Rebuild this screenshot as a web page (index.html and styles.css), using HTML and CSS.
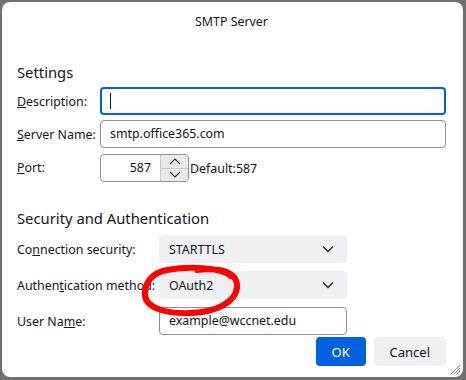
FILE: index.html
```html
<!DOCTYPE html>
<html lang="en">
<head>
    <meta charset="UTF-8">
    <title>SMTP Server</title>
    <link rel="stylesheet" href="styles.css">
</head>
<body>
<div class="dialog">
    <div class="title">SMTP Server</div>

    <h2 class="section">Settings</h2>
    <div class="settings">
        <label class="label"><u>D</u>escription:</label>
        <div class="field focused"><span class="caret"></span></div>

        <label class="label"><u>S</u>erver Name:</label>
        <div class="field">smtp.office365.com</div>

        <label class="label"><u>P</u>ort:</label>
        <div class="port-row">
            <div class="field port">
                <span class="port-value">587</span>
                <span class="spinner">
                    <span class="spin">
                        <svg width="12" height="7" viewBox="0 0 12 7"><path d="M1 6 L6 1 L11 6" fill="none" stroke="#333" stroke-width="1.1"/></svg>
                    </span>
                    <span class="spin">
                        <svg width="12" height="7" viewBox="0 0 12 7"><path d="M1 1 L6 6 L11 1" fill="none" stroke="#333" stroke-width="1.1"/></svg>
                    </span>
                </span>
            </div>
            <span class="default">Default:587</span>
        </div>
    </div>

    <h2 class="section security-title">Security and Authentication</h2>
    <div class="security">
        <label class="label">Co<u>n</u>nection security:</label>
        <div class="select">
            <span>STARTTLS</span>
            <svg width="12" height="8" viewBox="0 0 12 8"><path d="M1 1.5 L6 6.5 L11 1.5" fill="none" stroke="#222" stroke-width="1.3"/></svg>
        </div>

        <label class="label">Authen<u>t</u>ication method:</label>
        <div class="select">
            <span>OAuth2</span>
            <svg width="12" height="8" viewBox="0 0 12 8"><path d="M1 1.5 L6 6.5 L11 1.5" fill="none" stroke="#222" stroke-width="1.3"/></svg>
        </div>

        <label class="label">User Na<u>m</u>e:</label>
        <div class="field user">example@wccnet.edu</div>
    </div>

    <div class="buttons">
        <button class="btn primary">OK</button>
        <button class="btn">Cancel</button>
    </div>

    <!-- hand-drawn red mark around the auth method -->
    <svg class="scribble" width="106" height="54" viewBox="0 0 106 54">
        <path d="M92 12 C80 3 50 2 28 6 C12 9 5 20 6 32 C8 45 30 50 52 49 C78 48 96 38 98 24 C99 14 92 8 80 6 C72 5 64 5 58 6"
              fill="none" stroke="#f00" stroke-width="6" stroke-linecap="round"/>
    </svg>

    <svg class="grip" width="12" height="12" viewBox="0 0 12 12">
        <path d="M11 2 L2 11 M11 5 L5 11 M11 8 L8 11" stroke="#888" stroke-width="1"/>
    </svg>
</div>
</body>
</html>
```

FILE: styles.css
```css
body {
    margin: 0;
    background-color: #707070;
    font-family: "Noto Sans", "Open Sans", sans-serif;
    font-size: 12.4px;
    color: #15141a;
}
.dialog {
    position: relative;
    width: 461px;
    height: 375px;
    margin: 2px 0 0 2px;
    box-sizing: border-box;
    padding: 0 17px 0 15px;
    background-color: white;
    border-radius: 8px;
}
.title {
    height: 40px;
    line-height: 40px;
    text-align: center;
}
.section {
    margin: 20px 0 5px 0;
    font-size: 14.8px;
    font-weight: normal;
    line-height: 20px;
}
.settings {
    display: grid;
    grid-template-columns: 83px 1fr;
    row-gap: 5px;
    align-items: center;
}
.label {
    white-space: nowrap;
}
.label u {
    text-decoration-thickness: 1px;
}
.field {
    height: 28px;
    box-sizing: border-box;
    border: 1px solid #8f8f9d;
    border-radius: 4px;
    padding: 0 9px;
    line-height: 26px;
    background: white;
}
.field.focused {
    border: 2px solid #0061e0;
    padding: 0 8px;
    display: flex;
    align-items: center;
}
.caret {
    display: inline-block;
    width: 1px;
    height: 16px;
    background: #15141a;
}
.port-row {
    display: flex;
    align-items: center;
    margin-top: 1px;
}
.field.port {
    width: 89px;
    padding: 0;
    display: flex;
    justify-content: flex-end;
    overflow: hidden;
}
.port-value {
    padding-right: 9px;
}
.spinner {
    display: flex;
    flex-direction: column;
    width: 27px;
    border-left: 1px solid #c8c8cc;
}
.spin {
    flex: 1;
    display: flex;
    align-items: center;
    justify-content: center;
    background: #e9e9ed;
}
.spin + .spin {
    border-top: 1px solid #c8c8cc;
}
.default {
    margin-left: 1px;
}
.security-title {
    margin-top: 26px;
    margin-bottom: 7px;
}
.security {
    display: grid;
    grid-template-columns: 142px 188px;
    row-gap: 8px;
    align-items: center;
}
.select {
    height: 28px;
    box-sizing: border-box;
    padding: 0 13px 0 10px;
    display: flex;
    align-items: center;
    justify-content: space-between;
    background-color: #f0f0f4;
    border-radius: 4px;
}
.buttons {
    display: flex;
    justify-content: flex-end;
    gap: 8px;
    margin-top: 2px;
}
.btn {
    height: 29px;
    padding: 0 16px;
    border: none;
    border-radius: 4px;
    font-family: inherit;
    font-size: 13px;
    color: #15141a;
    background-color: #f0f0f4;
}
.btn.primary {
    width: 50px;
    color: white;
    background-color: #0061e0;
}
.scribble {
    position: absolute;
    left: 137px;
    top: 262px;
}
.grip {
    position: absolute;
    right: 2px;
    bottom: 2px;
}
```
